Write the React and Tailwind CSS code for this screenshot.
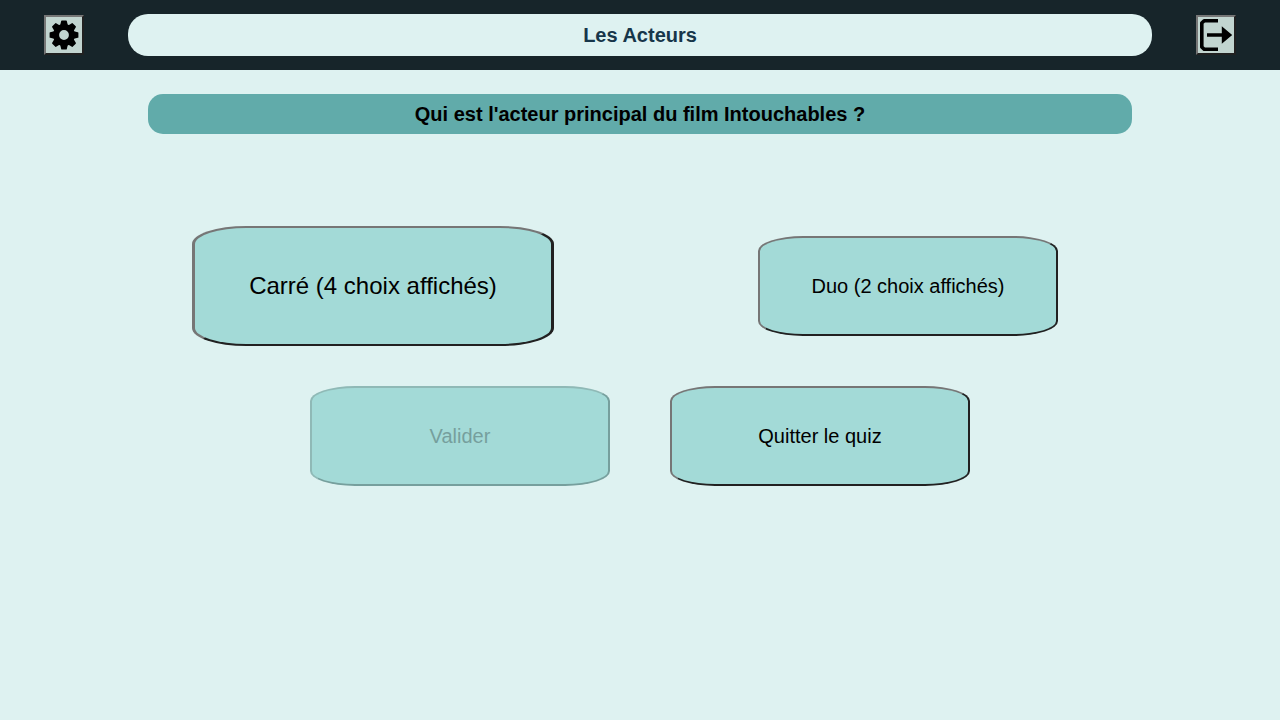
const bevel =
  "border-2 border-t-[#767676] border-l-[#767676] border-r-[#212121] border-b-[#212121]";
const choice = "flex items-center justify-center rounded-[15%] bg-[#a3dad7] text-center text-black";

function IconButton({ label, children }) {
  return (
    <div className="flex items-center justify-center">
      <button type="button" aria-label={label} className={`size-10 bg-[#c2d5d0] ${bevel}`}>
        {children}
      </button>
    </div>
  );
}

function GearIcon() {
  return (
    <svg viewBox="0 0 36 36" className="size-9" aria-hidden="true">
      <circle cx="18" cy="18" r="7.9" fill="none" stroke="#000" strokeWidth="6" />
      {[0, 45, 90, 135, 180, 225, 270, 315].map((angle) => (
        <path key={angle} d="M13.9 9.2L15.2 4.1Q15.3 3.6 15.8 3.6H20.2Q20.7 3.6 20.8 4.1L22.1 9.2z" transform={`rotate(${angle} 18 18)`} />
      ))}
    </svg>
  );
}

function ExitIcon() {
  return (
    <svg viewBox="0 0 36 36" className="size-9" aria-hidden="true">
      <path d="M20 3.7H6.2L3.8 6.1V29.9L6.2 32.3H20" fill="none" stroke="#000" strokeWidth="3.6" strokeLinejoin="round" />
      <path d="M9 16.2H23.8V9.2L34.2 18 23.8 26.8V19.8H9z" />
    </svg>
  );
}

export default function App() {
  return (
    <div className="min-h-screen bg-[#def2f1] font-['Liberation_Sans',Arial,sans-serif] text-xl">
      <header className="grid grid-cols-[1fr_8fr_1fr] items-center bg-[#17252a] py-3.5">
        <IconButton label="Paramètres">
          <GearIcon />
        </IconButton>
        <h1 className="rounded-[20px] bg-[#def2f1] py-[7px] text-center font-bold text-[#17364a]">Les Acteurs</h1>
        <IconButton label="Quitter">
          <ExitIcon />
        </IconButton>
      </header>
      <main className="pt-6">
        <div className="px-[10%]">
          <h2 className="mx-5 rounded-[15px] bg-[#61abaa] py-1.5 text-center font-bold text-black">
            Qui est l'acteur principal du film Intouchables ?
          </h2>
        </div>
        <div className="mt-[92px] flex items-center justify-between pr-[222px] pl-48">
          <button type="button" className={`h-[120px] w-[362px] text-2xl ${choice} ${bevel} border-x-3`}>
            Carré (4 choix affichés)
          </button>
          <button type="button" className={`h-[100px] w-[300px] ${choice} ${bevel}`}>
            Duo (2 choix affichés)
          </button>
        </div>
        <div className="mt-10 flex justify-center gap-[60px]">
          <button
            type="button"
            disabled
            className="flex h-[100px] w-[300px] items-center justify-center rounded-[15%] border-2 border-t-[#8fb9b6] border-r-[#769f9d] border-b-[#769f9d] border-l-[#8fb9b6] bg-[#a3dad7] text-[#769f9d]"
          >
            Valider
          </button>
          <button type="button" className={`h-[100px] w-[300px] ${choice} ${bevel}`}>
            Quitter le quiz
          </button>
        </div>
      </main>
    </div>
  );
}
